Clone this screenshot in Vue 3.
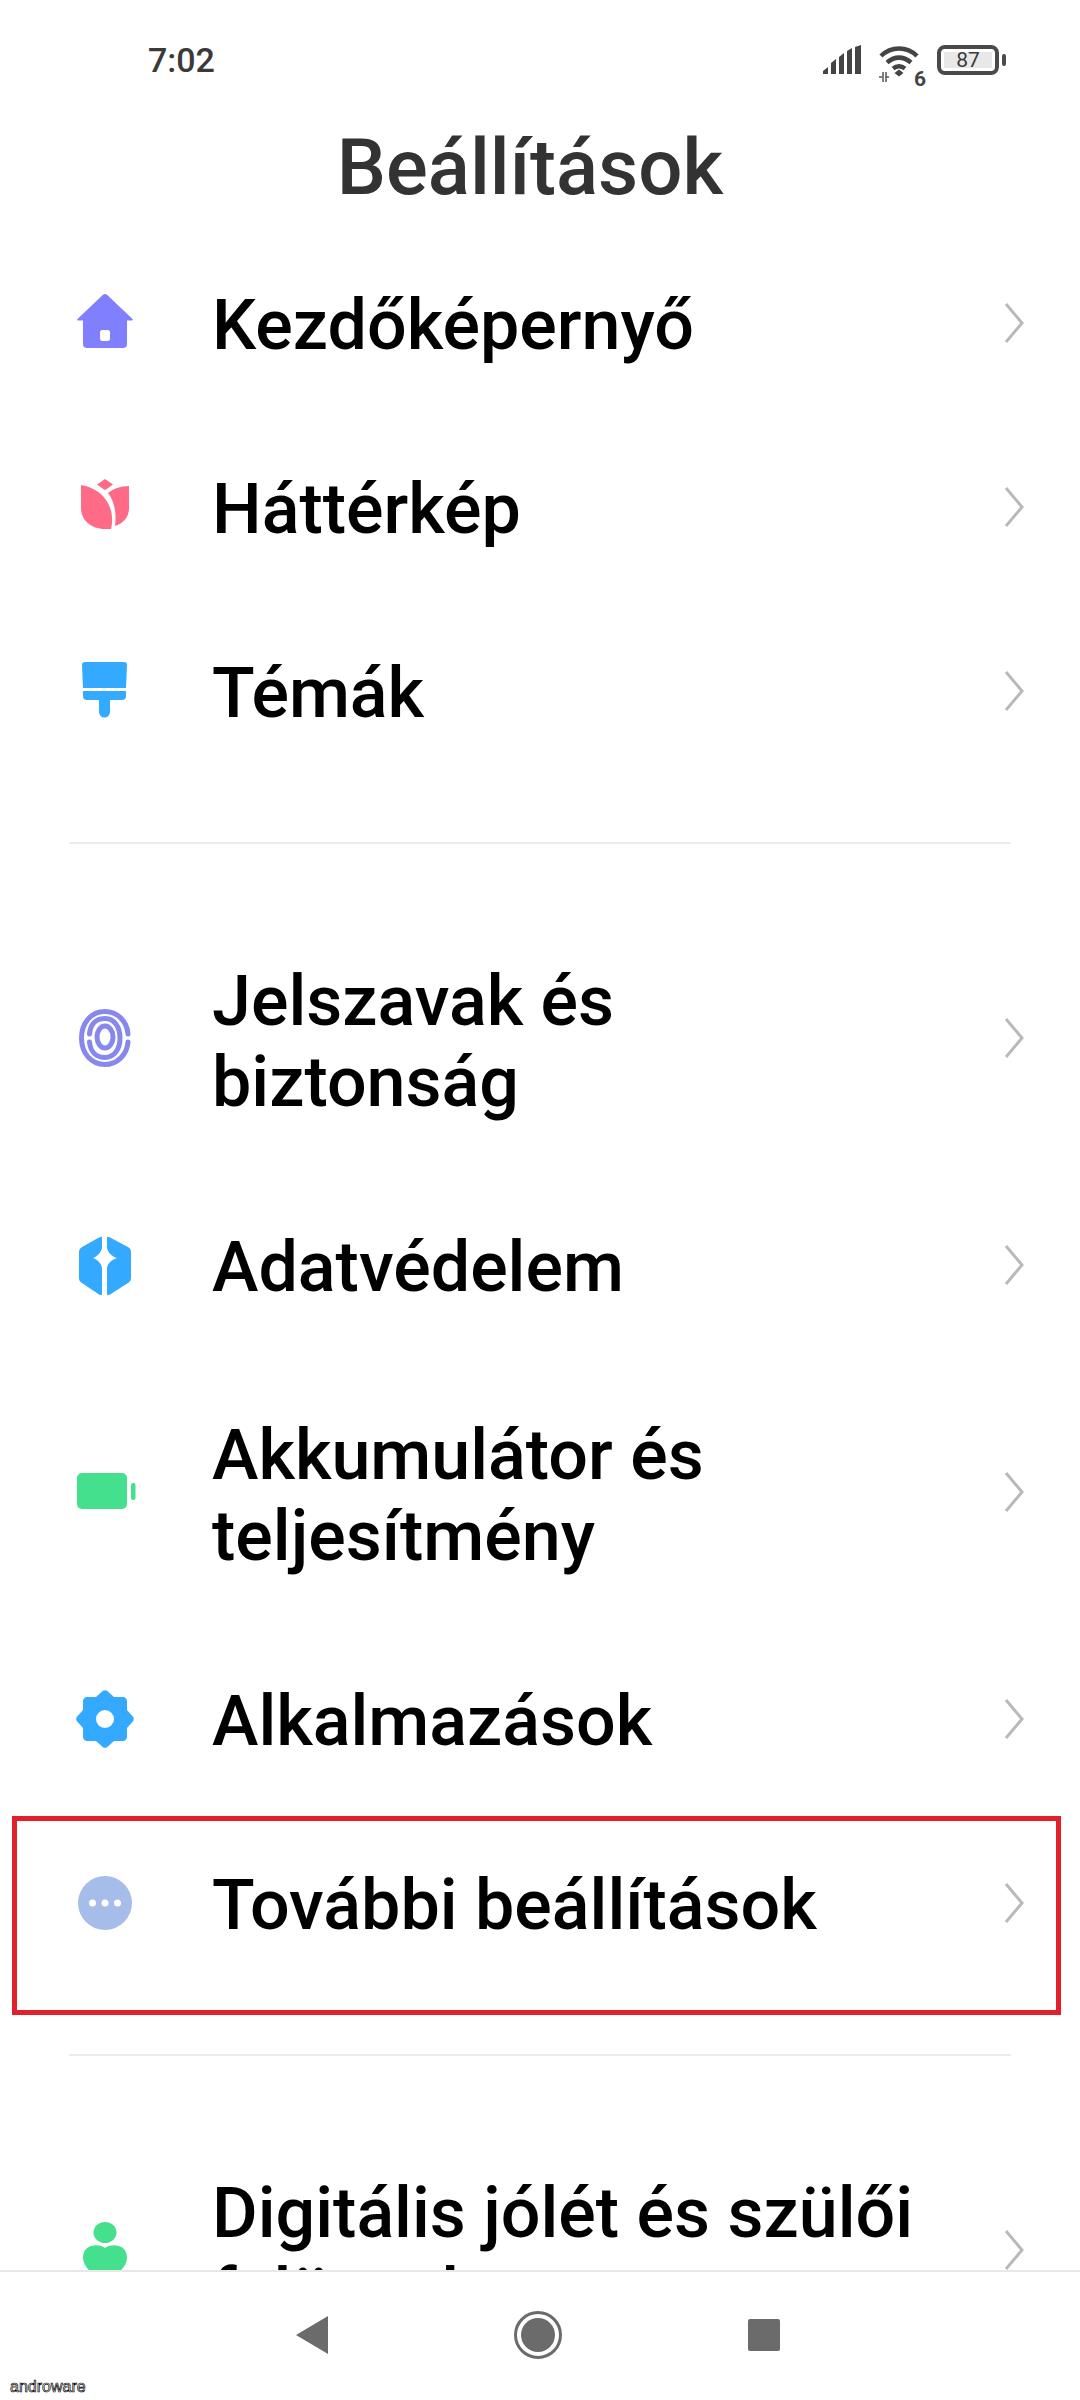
<script setup>
const groups = [
  [
    { id: 'home', label: 'Kezdőképernyő' },
    { id: 'tulip', label: 'Háttérkép' },
    { id: 'brush', label: 'Témák' },
  ],
  [
    { id: 'finger', label: 'Jelszavak és\nbiztonság', tall: true },
    { id: 'shield', label: 'Adatvédelem' },
    { id: 'battery', label: 'Akkumulátor és\nteljesítmény', tall: true },
    { id: 'gear', label: 'Alkalmazások' },
    { id: 'more', label: 'További beállítások' },
  ],
  [{ id: 'person', label: 'Digitális jólét és szülői\nfelügyelet', tall: true }],
]
</script>

<template>
  <div class="phone">
    <div class="status">
      <span class="time">7:02</span>
      <div class="status-icons">
        <svg class="signal" width="40" height="30" viewBox="0 0 40 30">
          <path d="M0 29v-3l5-4v7zM8 29V18l5-4v15zM16 29V12l5-4v21zM24 29V6l5-3v26zM32 29V2l6-2v29z" fill="#444" />
        </svg>
        <div class="wifi">
          <svg width="46" height="38" viewBox="0 0 46 38">
            <path d="M4 11C14 1 30 1 40 11M10 17.500c8-6.500 16-6.500 24 0M16 23.500c4-3 8-3 12 0" fill="none" stroke="#444" stroke-width="4.500" />
            <path d="M22 24.500l4.500 3.500-4.500 3.500-4.500-3.500z" fill="#444" />
            <path d="M2 32h3M6 27v10M9 27v10M9 32h3" fill="none" stroke="#555" stroke-width="1.500" />
          </svg>
          <span class="wifi-gen">6</span>
        </div>
        <div class="batt">
          <div class="batt-body"><span class="batt-level">87</span></div>
          <span class="batt-nub"></span>
        </div>
      </div>
    </div>

    <h1 class="title">Beállítások</h1>

    <div v-for="(group, i) in groups" :key="i" class="group">
      <div v-for="item in group" :key="item.id" class="row" :class="{ tall: item.tall }">
        <svg class="icon" width="60" height="60" viewBox="0 0 60 60">
          <template v-if="item.id === 'home'">
            <path d="M28 .800a3 3 0 0 1 4 0L57.500 25c.7.700.400 1.500-.6 1.500H52V50a4 4 0 0 1-4 4H12a4 4 0 0 1-4-4V26.500H3.100c-1 0-1.300-.8-.6-1.500z" fill="#8080ff" />
            <rect x="25" y="36" width="10" height="11" rx="2.500" fill="#fff" />
          </template>
          <template v-else-if="item.id === 'tulip'">
            <path d="M30 1l8 5.500-7 5c-.6.400-1.400.400-2 0l-7-5z" fill="#ff6b87" />
            <path d="M6 7c15 2 30 14 31 32 .3 5 0 8-1 12h-6C16 51 6 42 6 30z" fill="#ff6b87" />
            <path d="M40 48c1.500-12 0-24-7-33 5-4 12-7 21-7v22c0 9-5 15-14 18z" fill="#ff6b87" />
          </template>
          <template v-else-if="item.id === 'brush'">
            <path d="M10 0h39a3 3 0 0 1 3 3l-1 23H8L7 3a3 3 0 0 1 3-3z" fill="#33aaff" />
            <path d="M8 29h43v5a4 4 0 0 1-4 4H35v12a5.500 5.500 0 0 1-11 0V38H12a4 4 0 0 1-4-4z" fill="#33aaff" />
          </template>
          <template v-else-if="item.id === 'finger'">
            <g fill="none" stroke="#8787ee" stroke-width="5" stroke-linecap="round">
              <path d="M53 25C52 12 42 2.500 30 2.500 16 2.500 6.500 14 6.500 29S16 55.500 30 55.500C42 55.500 52 46 53 33" />
              <path d="M14.500 25C15.500 14 22 9.500 30 9.500c9 0 15 8 15 19.500s-6 19.500-15 19.500c-8 0-14.500-5-15.500-15.500" />
            </g>
            <ellipse cx="30" cy="28" rx="8" ry="11" fill="none" stroke="#8787ee" stroke-width="5" />
          </template>
          <template v-else-if="item.id === 'shield'">
            <path d="M27 1v11c-1 4-4 8-9 10 5 2 8 5 9 10v26c0 1-1 1.500-3 .5L7 47c-2-1-3-3-3-5V16c0-2 1-4 3-5L24 1.500c2-1 3-1 3-.5z" fill="#33aaff" />
            <path d="M32 1v11c1 4 4 8 10 10-6 2-9 5-10 10v26c0 1 1 1.500 3 .5L53 47c2-1 3-3 3-5V16c0-2-1-4-3-5L35 1.500c-2-1-3-1-3-.5z" fill="#33aaff" />
          </template>
          <template v-else-if="item.id === 'battery'">
            <rect x="2" y="10" width="50" height="36" rx="5" fill="#45e08e" />
            <rect x="56" y="20" width="4.500" height="17" rx="2" fill="#45e08e" />
          </template>
          <template v-else-if="item.id === 'gear'">
            <path d="M28 .800c1-.8 3-.8 4 0L39 7h9c2 0 4 2 4 4v9l6.200 7c.8 1 .8 3 0 4L52 38v9c0 2-2 4-4 4h-9l-7 6.200c-1 .8-3 .8-4 0L21 51h-9c-2 0-4-2-4-4v-9L1.800 31c-.8-1-.8-3 0-4L8 20v-9c0-2 2-4 4-4h9z" fill="#33aaff" />
            <circle cx="30" cy="29" r="9" fill="#fff" />
          </template>
          <template v-else-if="item.id === 'more'">
            <circle cx="30" cy="29" r="27" fill="#a6bde9" />
            <circle cx="17.500" cy="29" r="3.500" fill="#fff" />
            <circle cx="30" cy="29" r="3.500" fill="#fff" />
            <circle cx="42.500" cy="29" r="3.500" fill="#fff" />
          </template>
          <template v-else>
            <ellipse cx="30" cy="11.500" rx="11.500" ry="10.500" fill="#45e08e" />
            <path d="M30 27c4-4 22-6 22 10 0 9-10 17-22 24C18 54 8 46 8 37c0-16 18-14 22-10z" fill="#45e08e" />
          </template>
        </svg>
        <span class="label">{{ item.label }}</span>
        <svg class="chevron" width="20" height="40" viewBox="0 0 20 40">
          <path d="M2 1l16 19L2 39" fill="none" stroke="#b9b9b9" stroke-width="3" />
        </svg>
      </div>
    </div>

    <div class="highlight"></div>

    <div class="navbar">
      <span class="nav-back"></span>
      <span class="nav-home"></span>
      <span class="nav-recent"></span>
    </div>
    <span class="watermark">androware</span>
  </div>
</template>

<style scoped>
.phone {
  position: relative;
  width: 1080px;
  height: 2400px;
  overflow: hidden;
  background: #fff;
  font-family: Roboto, "Liberation Sans", sans-serif;
}

.status {
  display: flex;
  justify-content: space-between;
  align-items: center;
  height: 30px;
  padding: 45px 74px 0 148px;
}

.time {
  font-size: 34px;
  font-weight: 500;
  color: #3a3a3a;
}

.status-icons {
  display: flex;
  align-items: flex-start;
  gap: 14px;
  margin-top: 8px;
}

.signal {
  display: block;
}

.wifi {
  position: relative;
  width: 46px;
  height: 38px;
}

.wifi svg {
  display: block;
}

.wifi-gen {
  position: absolute;
  right: -3px;
  bottom: -7px;
  font-size: 21px;
  font-weight: 700;
  line-height: 1;
  color: #444;
}

.batt {
  display: flex;
  align-items: center;
  gap: 3px;
}

.batt-body {
  display: flex;
  width: 62px;
  height: 30px;
  box-sizing: border-box;
  padding: 3px;
  border: 4px solid #4a4a4a;
  border-radius: 8px;
}

.batt-level {
  flex: 1;
  background: #e8e8e8;
  font-size: 21px;
  line-height: 16px;
  text-align: center;
  color: #3a3a3a;
}

.batt-nub {
  width: 4px;
  height: 12px;
  border-radius: 2px;
  background: #4a4a4a;
}

.title {
  margin: 0;
  padding: 38px 20px 0 0;
  height: 119px;
  box-sizing: content-box;
  font-size: 78px;
  font-weight: 500;
  line-height: 109px;
  text-align: center;
  color: #333;
}

.group {
  padding-bottom: 60px;
  margin-bottom: 60px;
  position: relative;
}

.group::after {
  content: "";
  position: absolute;
  left: 69px;
  right: 69px;
  bottom: 0;
  height: 2px;
  background: #ececec;
}

.row {
  display: flex;
  align-items: center;
  gap: 77px;
  height: 184px;
  box-sizing: border-box;
  padding: 0 56px 0 75px;
}

.row.tall {
  height: 270px;
}

.icon {
  flex: none;
  overflow: visible;
}

.label {
  flex: 1;
  padding-top: 3px;
  font-size: 70px;
  font-weight: 500;
  line-height: 81px;
  color: #000;
  white-space: pre-line;
}

.row.tall .label {
  padding-top: 5px;
}

.chevron {
  flex: none;
  margin-bottom: 2px;
}

.highlight {
  position: absolute;
  left: 12px;
  top: 1816px;
  width: 1049px;
  height: 199px;
  box-sizing: border-box;
  border: 5px solid #e2202c;
}

.navbar {
  position: absolute;
  left: 0;
  right: 0;
  bottom: 0;
  height: 130px;
  display: flex;
  justify-content: center;
  align-items: center;
  gap: 186px;
  padding: 0 4px 2px 0;
  box-sizing: border-box;
  background: #fff;
  border-top: 2px solid #e8e8e8;
}

.nav-back {
  width: 32px;
  height: 38px;
  background: #6b6b6b;
  clip-path: polygon(100% 0, 100% 100%, 0 50%);
}

.nav-home {
  width: 48px;
  height: 48px;
  box-sizing: border-box;
  border: 3px solid #6b6b6b;
  border-radius: 50%;
  padding: 4px;
  background: #6b6b6b content-box;
}

.nav-recent {
  width: 32px;
  height: 32px;
  border-radius: 2px;
  background: #6b6b6b;
}

.watermark {
  position: absolute;
  left: 10px;
  bottom: 6px;
  font-family: "Liberation Sans", sans-serif;
  font-size: 16px;
  line-height: 14px;
  color: #fff;
  -webkit-text-stroke: 0.7px #000;
}
</style>
